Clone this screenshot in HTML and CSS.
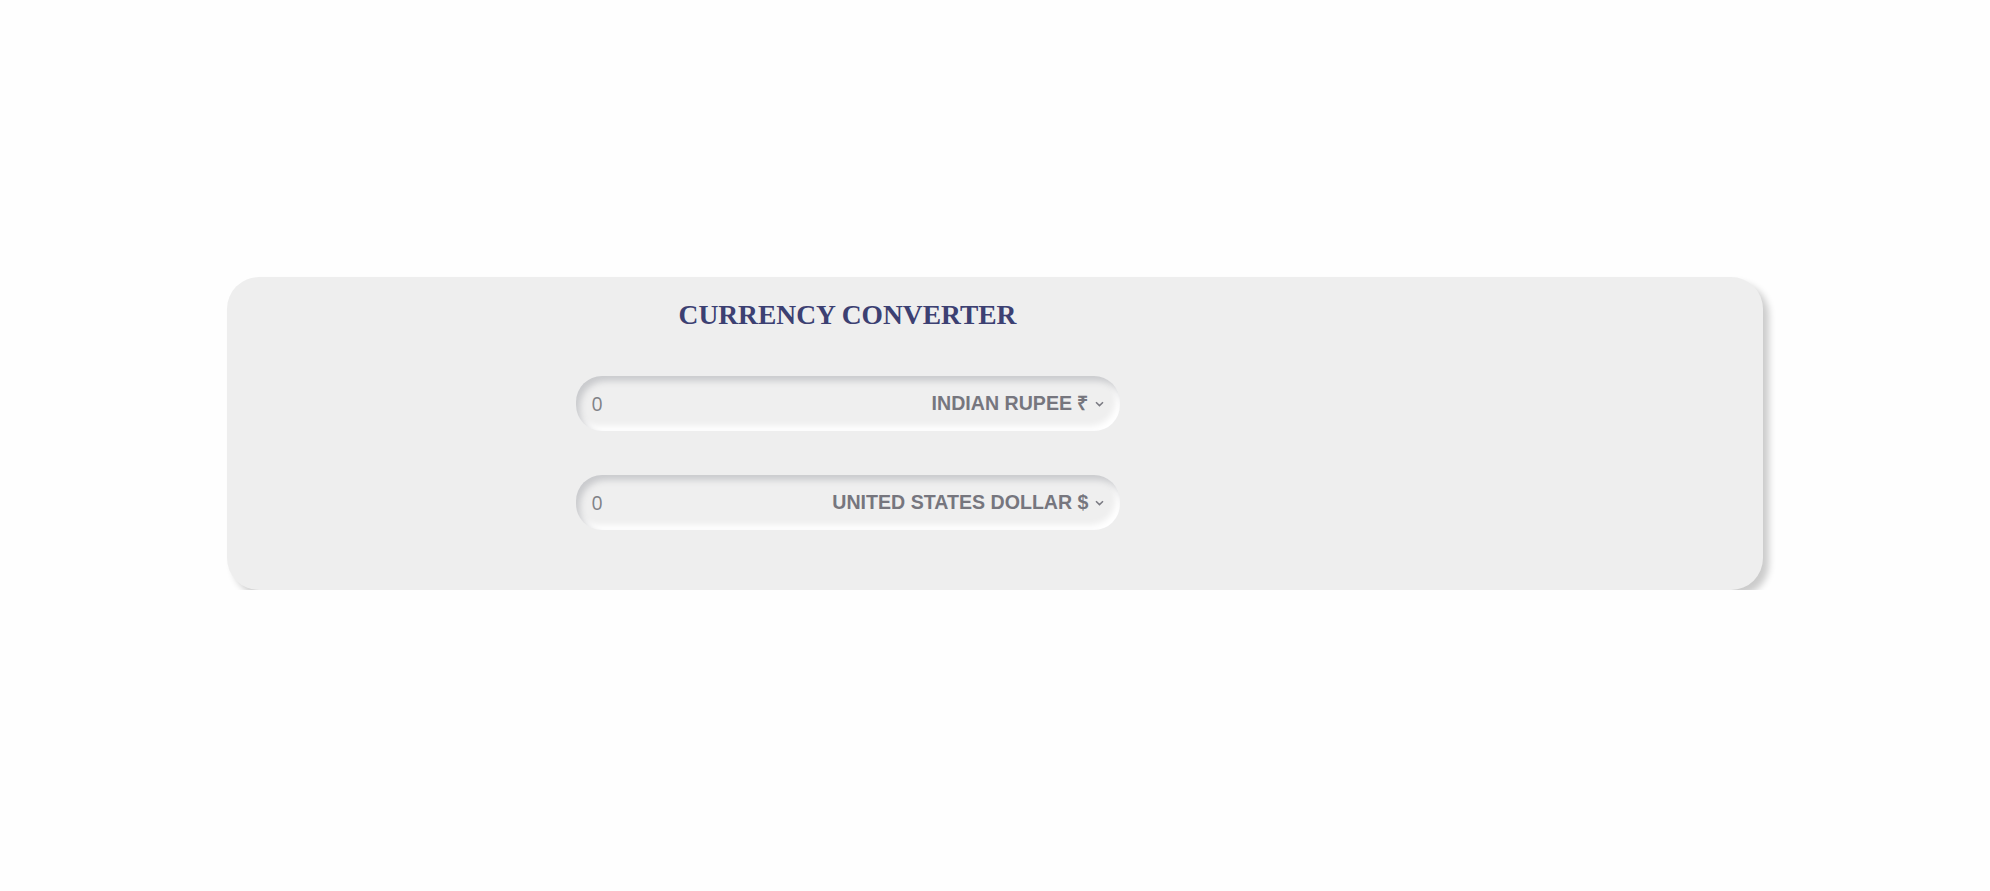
FILE: index.html
```html
<!DOCTYPE html>
<html lang="en">
<head>
<meta charset="utf-8">
<title>Currency Converter</title>
<link rel="stylesheet" href="styles.css">
</head>
<body>
<main class="page">
  <section class="card">
    <div class="converter">
      <h1 class="title">CURRENCY CONVERTER</h1>
      <div class="field">
        <input class="amount" type="text" value="0">
        <select class="currency"><option>INDIAN RUPEE ₹</option></select>
        <svg class="chevron" width="9" height="6" viewBox="0 0 9 6"><path d="M1 1.2 L4.5 4.6 L8 1.2" fill="none" stroke="#7a7a82" stroke-width="1.5"/></svg>
      </div>
      <div class="field">
        <input class="amount" type="text" value="0">
        <select class="currency"><option>UNITED STATES DOLLAR $</option></select>
        <svg class="chevron" width="9" height="6" viewBox="0 0 9 6"><path d="M1 1.2 L4.5 4.6 L8 1.2" fill="none" stroke="#7a7a82" stroke-width="1.5"/></svg>
      </div>
    </div>
    <div class="aside"></div>
  </section>
</main>
</body>
</html>
```
FILE: styles.css
```css
html, body {
  margin: 0;
  padding: 0;
  background: #fefefe;
}

.page {
  padding-top: 277px;
}

.card {
  width: 1536px;
  height: 313px;
  margin: 0 auto;
  box-sizing: border-box;
  background: #eeeeee;
  border-radius: 32px;
  box-shadow: 6px 6px 7px rgba(0, 0, 0, 0.2);
  display: grid;
  grid-template-columns: 1241px 1fr;
}

.converter {
  display: flex;
  flex-direction: column;
  align-items: center;
  padding-top: 22px;
}

.title {
  margin: 0;
  font-family: "Liberation Serif", "Times New Roman", serif;
  font-weight: bold;
  font-size: 27.5px;
  line-height: 32px;
  color: #3c4072;
}

.field {
  margin-top: 45px;
  width: 544px;
  height: 55px;
  box-sizing: border-box;
  border-radius: 26px;
  background: #efefef;
  box-shadow: inset 4px 5px 6px #c9cacd, inset -4px -5px 6px #ffffff;
  display: flex;
  align-items: center;
  padding: 0 16px 1px 16px;
}

.field + .field {
  margin-top: 44px;
}

.amount {
  flex: 1;
  min-width: 0;
  border: 0;
  outline: none;
  background: transparent;
  padding: 0;
  margin: 0;
  font-family: "Open Sans", "Liberation Sans", sans-serif;
  font-size: 19.5px;
  color: #808287;
}

.currency {
  appearance: none;
  -webkit-appearance: none;
  border: 0;
  outline: none;
  background: transparent;
  padding: 0;
  margin: 0;
  font-family: "Liberation Sans", Arial, sans-serif;
  font-weight: bold;
  font-size: 19.6px;
  color: #76767e;
  text-align: right;
}

.chevron {
  margin-left: 6px;
  margin-top: 2px;
  flex: none;
}
```
